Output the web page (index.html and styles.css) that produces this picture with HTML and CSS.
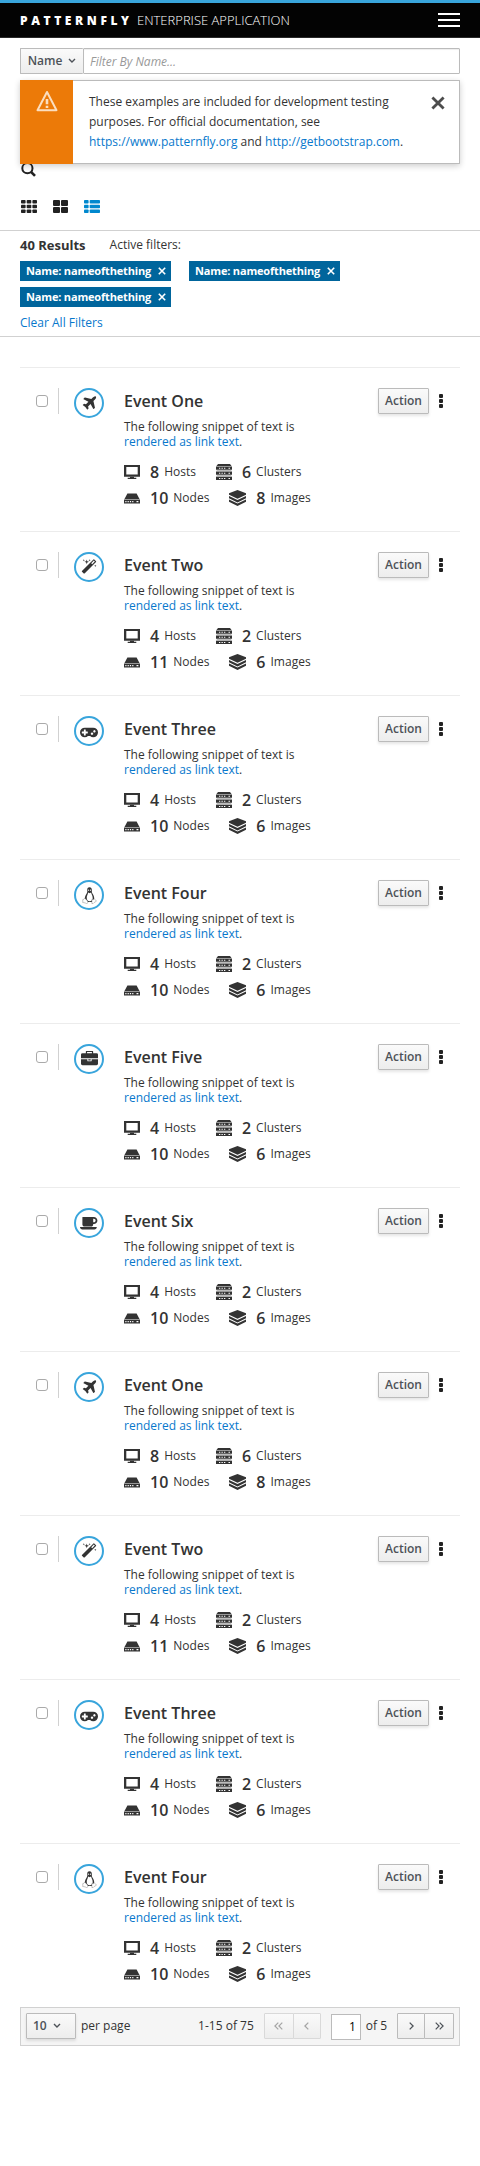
FILE: index.html
```html
<!DOCTYPE html>
<html lang="en">
<head>
<meta charset="utf-8">
<title>PatternFly Enterprise Application</title>
<link rel="stylesheet" href="styles.css">
</head>
<body>
<svg class="sprite" width="0" height="0" aria-hidden="true">
  <symbol id="plane" viewBox="0 0 1792 1792"><path d="M1568 160q44 52 12 148t-108 172l-161 161 160 696q5 19-12 33l-128 96q-7 6-19 6-4 0-7-1-15-3-21-16l-279-508-259 259 53 194q5 17-8 31l-96 96q-9 9-23 9h-2q-15-2-24-13l-189-252-252-189q-11-7-13-23-1-13 9-25l96-97q9-9 23-9 6 0 8 1l194 53 259-259-508-279q-14-8-17-24-2-16 9-27l128-128q14-13 30-8l665 159 160-160q76-76 172-108t148 12z"/></symbol>
  <symbol id="magic" viewBox="0 0 1792 1792"><path d="M1254 581l293-293-107-107-293 293zm447-293q0 27-18 45l-1286 1286q-18 18-45 18t-45-18l-198-198q-18-18-18-45t18-45l1286-1286q18-18 45-18t45 18l198 198q18 18 18 45zm-1351-190l98 30-98 30-30 98-30-98-98-30 98-30 30-98zm350 162l196 60-196 60-60 196-60-196-196-60 196-60 60-196zm930 478l98 30-98 30-30 98-30-98-98-30 98-30 30-98zm-640-640l98 30-98 30-30 98-30-98-98-30 98-30 30-98z"/></symbol>
  <symbol id="gamepad" viewBox="0 20 1920 1792"><path d="M832 1088v-128q0-14-9-23t-23-9h-192v-192q0-14-9-23t-23-9h-128q-14 0-23 9t-9 23v192h-192q-14 0-23 9t-9 23v128q0 14 9 23t23 9h192v192q0 14 9 23t23 9h128q14 0 23-9t9-23v-192h192q14 0 23-9t9-23zm576 64q0-53-37.500-90.500t-90.500-37.500-90.500 37.500-37.500 90.500 37.500 90.500 90.500 37.500 90.500-37.500 37.500-90.500zm256-256q0-53-37.500-90.500t-90.500-37.500-90.500 37.500-37.500 90.500 37.500 90.500 90.500 37.500 90.500-37.500 37.500-90.500zm256 128q0 212-150 362t-362 150q-192 0-338-128h-220q-146 128-338 128-212 0-362-150t-150-362 150-362 362-150h896q212 0 362 150t150 362z"/></symbol>
  <symbol id="linux" viewBox="0 0 14 16"><path d="M7 .2C5.400.2 4.800 1.300 4.900 2.800c.1 1.700.1 2.300-.7 3.500C3.200 7.800 2.500 9.300 2.600 11l2.200 3h4.600l2-3c.2-1.800-.7-3.500-1.500-4.700C9.100 5.100 9.200 4.400 9.200 2.900 9.200 1.200 8.500.2 7 .2z"/><path fill="#fff" d="M5.700 5.200l1.300.7 1.500-.8c.4 1.800 1.700 3.300 1.500 5.400-.1 1.500-1 2.800-2.700 2.900-1.900.1-2.900-1.300-2.900-3.300 0-1.800 1-3 1.300-4.900z"/><circle cx="6.100" cy="3" r=".55" fill="#fff"/><circle cx="7.900" cy="3" r=".6" fill="#fff"/><path fill="#fff" stroke="#777" stroke-width=".4" d="M2.500 10.500l-.7 1-1.300.5.3 1.200-.3 1.300 2.500.5 1.500.7 1-.9-.3-1.600zM9.400 11.300l.8 1 1.400-1.200.8 1 1.200 1.200-2.200 1.300-1 1-1.200-.1z"/></symbol>
  <symbol id="briefcase" viewBox="0 30 1792 1792"><path d="M640 256h512v-128h-512v128zm1152 640v480q0 66-47 113t-113 47h-1472q-66 0-113-47t-47-113v-480h672v160q0 26 19 45t45 19h320q26 0 45-19t19-45v-160h672zm-768 0v128h-256v-128h256zm768-480v384h-1792v-384q0-66 47-113t113-47h352v-160q0-40 28-68t68-28h576q40 0 68 28t28 68v160h352q66 0 113 47t47 113z"/></symbol>
  <symbol id="coffee" viewBox="0 256 1920 1792"><path d="M1664 832q0-80-56-136t-136-56h-64v384h64q80 0 136-56t56-136zm-1664 704h1792q0 106-75 181t-181 75h-1280q-106 0-181-75t-75-181zm1856-704q0 159-112.500 271.500t-271.500 112.500h-64v32q0 92-66 158t-158 66h-704q-92 0-158-66t-66-158v-736q0-26 19-45t45-19h1152q159 0 271.500 112.500t112.500 271.500z"/></symbol>
  <symbol id="host" viewBox="0 0 16 16"><path fill-rule="evenodd" d="M0 1h16v11.700H0zM2.300 3v7.500h11.400V3z"/><path d="M6 12.700h4v1H6zM3.700 13.700h8.600V15H3.700z"/></symbol>
  <symbol id="cluster" viewBox="0 0 16 16"><path d="M2 0h12l1.500 2H.5z"/><path fill-rule="evenodd" d="M0 2.500h16v3.200H0zm3 1.200v1h1.300v-1zm2.500 0v1h1.300v-1zm2.500 0v1h1.300v-1zm4.500 0v1H14v-1zM0 7.500h16v3.200H0zm3 1.200v1h1.300v-1zm2.500 0v1h1.300v-1zm2.500 0v1h1.300v-1zm4.500 0v1H14v-1zM0 12.700h16V16H0zm3 1.200v1h1.300v-1zm2.500 0v1h1.300v-1zm2.500 0v1h1.300v-1zm4.500 0v1H14v-1z"/><path d="M1 6.400h14l.8.700H.2zM1 11.600h14l.8.700H.2z" opacity=".65"/></symbol>
  <symbol id="node" viewBox="0 0 16 16"><path d="M3.400 3.500h9.200L15.500 9H.5z"/><path fill-rule="evenodd" d="M0 9.400h16v4.100H0zm1.300 1.700v1.200h1.200v-1.200zm2.300 0v1.200h1.200v-1.200zm2.300 0v1.200h1.200v-1.200zm2.300 0v1.200h1.200v-1.200zm4.300 0v1.200h1.900v-1.200z"/></symbol>
  <symbol id="image" viewBox="0 0 17 16"><path d="M8.500 0L17 3.300v1.500L8.500 8.800 0 4.800V3.300z"/><path d="M0 6l8.500 4L17 6v2.200l-8.500 4.200L0 8.200zM0 9.600l8.500 4 8.500-4v2.200L8.500 16 0 11.800z"/></symbol>
  <symbol id="down" viewBox="0 0 8 6"><path d="M1 1l3 3 3-3" fill="none" stroke="currentColor" stroke-width="1.400"/></symbol>
  <symbol id="x" viewBox="0 0 10 10"><path d="M1 1l8 8M9 1L1 9" fill="none" stroke="currentColor" stroke-width="2"/></symbol>
  <symbol id="angle" viewBox="0 0 5 8"><path d="M.7.6L4.100 4 .7 7.400" fill="none" stroke="currentColor" stroke-width="1.300"/></symbol>
  <symbol id="angles" viewBox="0 0 9 8"><path d="M.7.6L4.100 4 .7 7.400M4.700.6L8.100 4 4.700 7.400" fill="none" stroke="currentColor" stroke-width="1.200"/></symbol>
</svg>

<header class="navbar">
  <div class="brand"><b>PATTERNFLY</b><span>ENTERPRISE APPLICATION</span></div>
  <div class="burger"><i></i><i></i><i></i></div>
</header>

<section class="toolbar">
  <div class="filter">
    <button class="btn filter-type">Name<svg class="caret"><use href="#down"/></svg></button>
    <input class="filter-input" type="text" placeholder="Filter By Name...">
  </div>
  <div class="find-row">
    <svg class="find" viewBox="0 0 15 15"><circle cx="6.400" cy="6.200" r="5.100" fill="none" stroke="currentColor" stroke-width="2"/><path d="M10 9.800l4 4" stroke="currentColor" stroke-width="2.600"/></svg>
    <div class="toast">
      <div class="toast-icon"><svg viewBox="0 0 22 22"><path d="M11 2L20.500 20.200h-19z" fill="none" stroke="currentColor" stroke-width="2" stroke-linejoin="round"/><path d="M9.700 9h2.600v5.200H9.700zM9.700 15.800h2.600V18H9.700z"/></svg></div>
      <p class="toast-text">These examples are included for development testing purposes. For official documentation, see <a>https://www.patternfly.org</a> and <a>http://getbootstrap.com</a>.</p>
      <svg class="toast-close"><use href="#x"/></svg>
    </div>
  </div>
  <div class="views">
    <svg class="view-grid" viewBox="0 0 16 13"><g><rect width="4.600" height="3.600" rx=".8"/><rect x="5.700" width="4.600" height="3.600" rx=".8"/><rect x="11.400" width="4.600" height="3.600" rx=".8"/><rect y="4.700" width="4.600" height="3.600" rx=".8"/><rect x="5.700" y="4.700" width="4.600" height="3.600" rx=".8"/><rect x="11.400" y="4.700" width="4.600" height="3.600" rx=".8"/><rect y="9.400" width="4.600" height="3.600" rx=".8"/><rect x="5.700" y="9.400" width="4.600" height="3.600" rx=".8"/><rect x="11.400" y="9.400" width="4.600" height="3.600" rx=".8"/></g></svg>
    <svg class="view-cards" viewBox="0 0 15 13"><rect width="7" height="6" rx="1"/><rect x="8" width="7" height="6" rx="1"/><rect y="7" width="7" height="6" rx="1"/><rect x="8" y="7" width="7" height="6" rx="1"/></svg>
    <svg class="view-list" viewBox="0 0 16 13"><rect width="4.600" height="3.600" rx=".8"/><rect x="5.700" width="10.300" height="3.600" rx=".8"/><rect y="4.700" width="4.600" height="3.600" rx=".8"/><rect x="5.700" y="4.700" width="10.300" height="3.600" rx=".8"/><rect y="9.400" width="4.600" height="3.600" rx=".8"/><rect x="5.700" y="9.400" width="10.300" height="3.600" rx=".8"/></svg>
  </div>
</section>

<section class="results">
  <div class="results-head"><h5>40 Results</h5><span>Active filters:</span></div>
  <ul class="chips">
    <li>Name: nameofthething<svg><use href="#x"/></svg></li>
    <li>Name: nameofthething<svg><use href="#x"/></svg></li>
    <li>Name: nameofthething<svg><use href="#x"/></svg></li>
  </ul>
  <a class="clear">Clear All Filters</a>
</section>

<main class="list">
  <article class="item">
    <div class="check"><input type="checkbox"></div>
    <div class="badge"><svg class="w17"><use href="#plane"/></svg></div>
    <div class="body">
      <h2>Event One</h2>
      <p>The following snippet of text is <a>rendered as link text</a>.</p>
      <div class="stats"><span><svg><use href="#host"/></svg><b>8</b>Hosts</span><span><svg><use href="#cluster"/></svg><b>6</b>Clusters</span><span><svg><use href="#node"/></svg><b>10</b>Nodes</span><span><svg class="w17"><use href="#image"/></svg><b>8</b>Images</span></div>
    </div>
    <div class="actions"><button class="btn">Action</button><div class="kebab"><i></i><i></i><i></i></div></div>
  </article>
  <article class="item">
    <div class="check"><input type="checkbox"></div>
    <div class="badge"><svg class="w16"><use href="#magic"/></svg></div>
    <div class="body">
      <h2>Event Two</h2>
      <p>The following snippet of text is <a>rendered as link text</a>.</p>
      <div class="stats"><span><svg><use href="#host"/></svg><b>4</b>Hosts</span><span><svg><use href="#cluster"/></svg><b>2</b>Clusters</span><span><svg><use href="#node"/></svg><b>11</b>Nodes</span><span><svg class="w17"><use href="#image"/></svg><b>6</b>Images</span></div>
    </div>
    <div class="actions"><button class="btn">Action</button><div class="kebab"><i></i><i></i><i></i></div></div>
  </article>
  <article class="item">
    <div class="check"><input type="checkbox"></div>
    <div class="badge"><svg class="w18"><use href="#gamepad"/></svg></div>
    <div class="body">
      <h2>Event Three</h2>
      <p>The following snippet of text is <a>rendered as link text</a>.</p>
      <div class="stats"><span><svg><use href="#host"/></svg><b>4</b>Hosts</span><span><svg><use href="#cluster"/></svg><b>2</b>Clusters</span><span><svg><use href="#node"/></svg><b>10</b>Nodes</span><span><svg class="w17"><use href="#image"/></svg><b>6</b>Images</span></div>
    </div>
    <div class="actions"><button class="btn">Action</button><div class="kebab"><i></i><i></i><i></i></div></div>
  </article>
  <article class="item">
    <div class="check"><input type="checkbox"></div>
    <div class="badge"><svg class="tall"><use href="#linux"/></svg></div>
    <div class="body">
      <h2>Event Four</h2>
      <p>The following snippet of text is <a>rendered as link text</a>.</p>
      <div class="stats"><span><svg><use href="#host"/></svg><b>4</b>Hosts</span><span><svg><use href="#cluster"/></svg><b>2</b>Clusters</span><span><svg><use href="#node"/></svg><b>10</b>Nodes</span><span><svg class="w17"><use href="#image"/></svg><b>6</b>Images</span></div>
    </div>
    <div class="actions"><button class="btn">Action</button><div class="kebab"><i></i><i></i><i></i></div></div>
  </article>
  <article class="item">
    <div class="check"><input type="checkbox"></div>
    <div class="badge"><svg class="w17"><use href="#briefcase"/></svg></div>
    <div class="body">
      <h2>Event Five</h2>
      <p>The following snippet of text is <a>rendered as link text</a>.</p>
      <div class="stats"><span><svg><use href="#host"/></svg><b>4</b>Hosts</span><span><svg><use href="#cluster"/></svg><b>2</b>Clusters</span><span><svg><use href="#node"/></svg><b>10</b>Nodes</span><span><svg class="w17"><use href="#image"/></svg><b>6</b>Images</span></div>
    </div>
    <div class="actions"><button class="btn">Action</button><div class="kebab"><i></i><i></i><i></i></div></div>
  </article>
  <article class="item">
    <div class="check"><input type="checkbox"></div>
    <div class="badge"><svg class="w18"><use href="#coffee"/></svg></div>
    <div class="body">
      <h2>Event Six</h2>
      <p>The following snippet of text is <a>rendered as link text</a>.</p>
      <div class="stats"><span><svg><use href="#host"/></svg><b>4</b>Hosts</span><span><svg><use href="#cluster"/></svg><b>2</b>Clusters</span><span><svg><use href="#node"/></svg><b>10</b>Nodes</span><span><svg class="w17"><use href="#image"/></svg><b>6</b>Images</span></div>
    </div>
    <div class="actions"><button class="btn">Action</button><div class="kebab"><i></i><i></i><i></i></div></div>
  </article>
  <article class="item">
    <div class="check"><input type="checkbox"></div>
    <div class="badge"><svg class="w17"><use href="#plane"/></svg></div>
    <div class="body">
      <h2>Event One</h2>
      <p>The following snippet of text is <a>rendered as link text</a>.</p>
      <div class="stats"><span><svg><use href="#host"/></svg><b>8</b>Hosts</span><span><svg><use href="#cluster"/></svg><b>6</b>Clusters</span><span><svg><use href="#node"/></svg><b>10</b>Nodes</span><span><svg class="w17"><use href="#image"/></svg><b>8</b>Images</span></div>
    </div>
    <div class="actions"><button class="btn">Action</button><div class="kebab"><i></i><i></i><i></i></div></div>
  </article>
  <article class="item">
    <div class="check"><input type="checkbox"></div>
    <div class="badge"><svg class="w16"><use href="#magic"/></svg></div>
    <div class="body">
      <h2>Event Two</h2>
      <p>The following snippet of text is <a>rendered as link text</a>.</p>
      <div class="stats"><span><svg><use href="#host"/></svg><b>4</b>Hosts</span><span><svg><use href="#cluster"/></svg><b>2</b>Clusters</span><span><svg><use href="#node"/></svg><b>11</b>Nodes</span><span><svg class="w17"><use href="#image"/></svg><b>6</b>Images</span></div>
    </div>
    <div class="actions"><button class="btn">Action</button><div class="kebab"><i></i><i></i><i></i></div></div>
  </article>
  <article class="item">
    <div class="check"><input type="checkbox"></div>
    <div class="badge"><svg class="w18"><use href="#gamepad"/></svg></div>
    <div class="body">
      <h2>Event Three</h2>
      <p>The following snippet of text is <a>rendered as link text</a>.</p>
      <div class="stats"><span><svg><use href="#host"/></svg><b>4</b>Hosts</span><span><svg><use href="#cluster"/></svg><b>2</b>Clusters</span><span><svg><use href="#node"/></svg><b>10</b>Nodes</span><span><svg class="w17"><use href="#image"/></svg><b>6</b>Images</span></div>
    </div>
    <div class="actions"><button class="btn">Action</button><div class="kebab"><i></i><i></i><i></i></div></div>
  </article>
  <article class="item">
    <div class="check"><input type="checkbox"></div>
    <div class="badge"><svg class="tall"><use href="#linux"/></svg></div>
    <div class="body">
      <h2>Event Four</h2>
      <p>The following snippet of text is <a>rendered as link text</a>.</p>
      <div class="stats"><span><svg><use href="#host"/></svg><b>4</b>Hosts</span><span><svg><use href="#cluster"/></svg><b>2</b>Clusters</span><span><svg><use href="#node"/></svg><b>10</b>Nodes</span><span><svg class="w17"><use href="#image"/></svg><b>6</b>Images</span></div>
    </div>
    <div class="actions"><button class="btn">Action</button><div class="kebab"><i></i><i></i><i></i></div></div>
  </article>
</main>

<footer class="pager">
  <button class="btn page-size">10<svg class="caret"><use href="#down"/></svg></button>
  <span class="per-page">per page</span>
  <span class="range">1-15 of 75</span>
  <div class="group off"><button class="btn wide"><svg class="dbl flip"><use href="#angles"/></svg></button><button class="btn"><svg class="sgl flip"><use href="#angle"/></svg></button></div>
  <input class="page" type="text" value="1">
  <span class="of">of 5</span>
  <div class="group"><button class="btn"><svg class="sgl"><use href="#angle"/></svg></button><button class="btn wide"><svg class="dbl"><use href="#angles"/></svg></button></div>
</footer>
</body>
</html>
```
FILE: styles.css
```css
* { box-sizing: border-box; }
body {
  margin: 0;
  min-height: 2166px;
  background: #fff;
  color: #333;
  font: 12px/20px "Open Sans", "Noto Sans", sans-serif;
}
svg { display: block; flex: none; fill: currentColor; }
.sprite { position: absolute; }
a { color: #0878cc; }
h2, h5, p, ul { margin: 0; padding: 0; }
button, input { font: inherit; margin: 0; }

.navbar {
  display: flex;
  justify-content: space-between;
  align-items: flex-start;
  height: 38px;
  padding: 10px 20px 0;
  background: #030303;
  border-top: 3px solid #39a5dc;
  border-bottom: 1px solid #292929;
  color: #fff;
}
.brand { display: flex; line-height: 15px; }
.brand b { width: 117px; font-size: 12px; font-weight: 800; letter-spacing: 3.600px; }
.brand span { font-size: 13px; font-weight: 300; }
.burger { display: grid; gap: 4px; width: 22px; }
.burger i { height: 2px; background: #fff; }

.toolbar { height: 193px; padding: 10px 20px 0; border-bottom: 1px solid #d1d1d1; }
.btn {
  display: flex;
  align-items: center;
  justify-content: center;
  height: 26px;
  padding: 0 6px;
  border: 1px solid #bbb;
  border-radius: 1px;
  background: linear-gradient(#fafafa, #ededed);
  box-shadow: 0 2px 3px rgba(3, 3, 3, .1);
  color: #4d5258;
  font-weight: 600;
  line-height: 22px;
}
.caret { width: 8px; height: 6px; margin-left: 6px; }
.filter { display: flex; }
.filter .btn { width: 63px; border-right: 0; box-shadow: none; }
.filter-input {
  flex: 1;
  height: 26px;
  padding: 2px 6px 1px;
  border: 1px solid #bbb;
  border-radius: 1px;
  box-shadow: inset 0 1px 1px rgba(3, 3, 3, .075);
}
.filter-input::placeholder { color: #999; font-style: italic; opacity: 1; }

/* The toast floats over the search button that wraps below the filter. */
.find-row { position: relative; height: 126px; padding: 88px 0 0 1px; color: #222; }
.find { width: 15px; height: 15px; }
.toast {
  position: absolute;
  top: 6px;
  left: 0;
  right: 0;
  display: flex;
  height: 84px;
  background: #fff;
  border: 1px solid #bbb;
  border-left: 0;
  border-radius: 1px;
  box-shadow: 0 2px 6px rgba(3, 3, 3, .2);
  color: #333;
}
.toast-icon { width: 53px; margin: -1px 0; padding: 10px 0 0 16px; background: #ec7a08; color: #fbdebf; }
.toast-icon svg { width: 22px; height: 22px; }
.toast-text { flex: 1; padding: 11px 0 0 16px; }
.toast-close { width: 14px; height: 14px; margin: 15px 14px 0 0; color: #4d4d4d; }
.views { display: flex; gap: 16px; padding: 0 1px; color: #222; }
.view-grid, .view-list { width: 16px; height: 13px; }
.view-cards { width: 15px; height: 13px; }
.view-list { color: #0088ce; }

.results { height: 106px; padding: 4px 20px 0; border-bottom: 1px solid #d1d1d1; }
.results-head { display: flex; gap: 24px; height: 26px; }
h5 { font-size: 13px; font-weight: 700; line-height: 20px; }
.chips { display: flex; flex-wrap: wrap; gap: 6px 18px; list-style: none; }
.chips li {
  display: flex;
  align-items: center;
  width: 151px;
  height: 20px;
  padding: 0 5px 0 6px;
  justify-content: space-between;
  background: #00659c;
  color: #fff;
  font-size: 11px;
  font-weight: 700;
  letter-spacing: -.17px;
}
.chips svg { width: 8px; height: 8px; margin-bottom: 1px; }
.clear { display: block; margin-top: 6px; }

.list { padding: 30px 20px 0; }
.item {
  display: flex;
  height: 164px;
  padding: 20px 10px 0 16px;
  border-top: 1px solid #ececec;
}
.check { width: 23px; height: 26px; padding-top: 7px; border-right: 1px solid #d1d1d1; }
.check input {
  display: block;
  appearance: none;
  width: 12px;
  height: 12px;
  border: 1px solid #aaa;
  border-radius: 3px;
  background: #fff;
}
.badge {
  display: grid;
  place-items: center;
  width: 30px;
  height: 30px;
  margin-left: 15px;
  border: 2px solid #39a5dc;
  border-radius: 50%;
}
.w16 { width: 16px; height: 16px; }
.w17 { width: 17px; height: 17px; }
.w18 { width: 18px; height: 17px; }
.tall { width: 15px; height: 17px; }
.body { width: 215px; margin-left: 20px; }
h2 { font-size: 16px; font-weight: 600; line-height: 26px; }
.body p { width: 180px; margin-top: 5px; line-height: 15px; }
.stats { display: flex; flex-wrap: wrap; column-gap: 20px; margin-top: 10px; }
.stats span { display: flex; align-items: center; height: 26px; }
.stats svg { height: 16px; }
.stats svg:not(.w17) { width: 16px; }
.stats b { margin: 0 5px 0 10px; font-size: 16px; font-weight: 600; }
.actions { display: flex; gap: 10px; margin-left: auto; padding-right: 1px; }
.actions .btn { width: 51px; }
.kebab { display: grid; gap: 1px; align-content: start; width: 4px; margin: 6px 6px 0 0; }
.kebab i { height: 4px; border-radius: 1px; background: #222; }

.pager {
  display: flex;
  height: 39px;
  margin: 0 20px;
  padding: 5px;
  border: 1px solid #d1d1d1;
  background: #f5f5f5;
  line-height: 26px;
}
.page-size { width: 50px; justify-content: flex-start; }
.per-page { margin-left: 5px; }
.range { margin-left: auto; }
.group { display: flex; }
.group .btn { width: 28px; padding: 0; box-shadow: none; }
.group .wide { width: 30px; }
.group .btn + .btn { margin-left: -1px; }
.group.off { margin: 0 10px; }
.off .btn { border-color: #d9d9d9; color: #a5a5a5; }
.sgl { width: 5px; height: 8px; }
.dbl { width: 9px; height: 8px; }
.flip { transform: scaleX(-1); }
.page { width: 30px; height: 26px; margin-top: 1px; padding: 0 4px; border: 1px solid #bbb; text-align: right; }
.of { margin: 0 10px 0 5px; }
```
